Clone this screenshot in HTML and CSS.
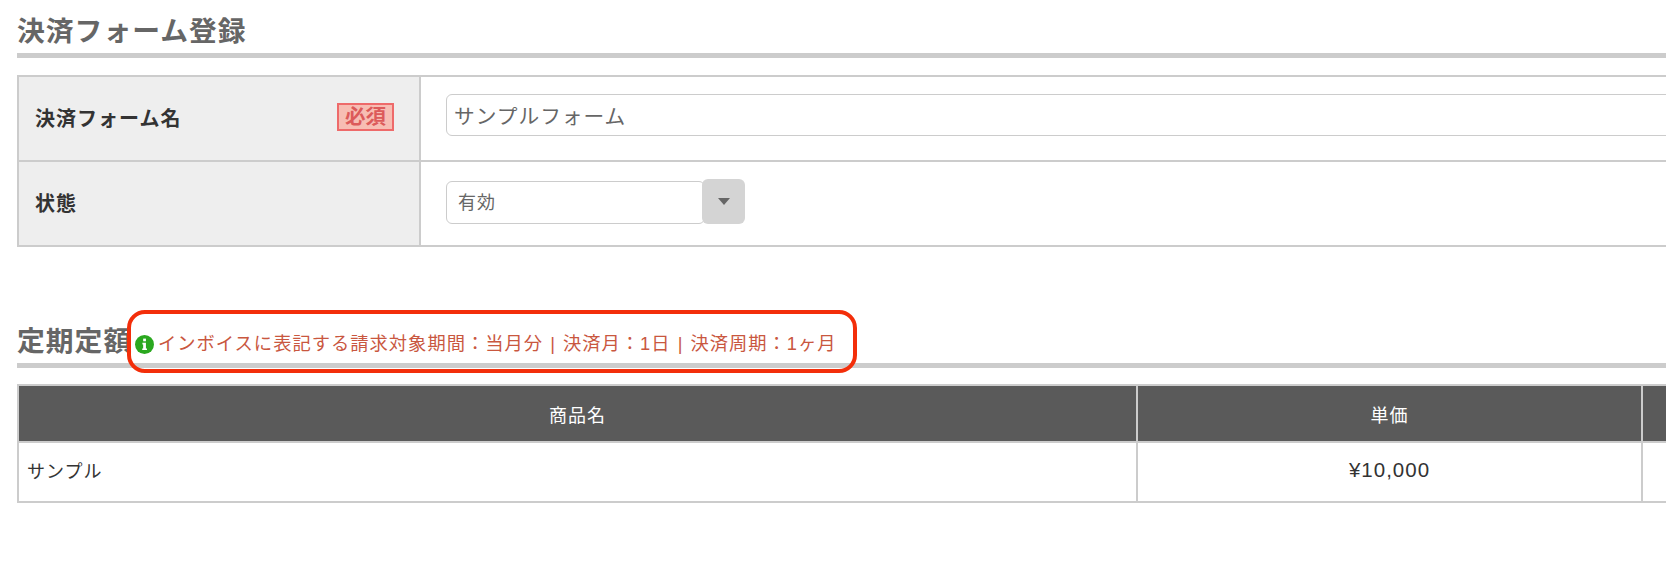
FILE: index.html
```html
<!DOCTYPE html>
<html lang="ja">
<head>
  <meta charset="UTF-8" />
  <title>決済フォーム登録</title>
  <link rel="stylesheet" href="styles.css">
</head>
<body>
  <div class="page">
    <!-- 基本情報 -->
    <section class="section-form">
      <h2 class="section-title"><span>決済フォーム登録</span></h2>
      <table class="form-table">
        <tr>
          <th>
            <div class="form-label">
              決済フォーム名
              <span class="required">必須</span>
            </div>
          </th>
          <td><input class="text-input" type="text" value="サンプルフォーム" /></td>
        </tr>
        <tr>
          <th><div class="form-label">状態</div></th>
          <td>
            <div class="select-wrap">
              <select class="select-box"><option>有効</option></select>
              <span class="select-btn"><span class="select-arrow"></span></span>
            </div>
          </td>
        </tr>
      </table>
    </section>

    <!-- 定期定額 -->
    <section class="section-items">
      <h2 class="section-title">
        <span class="title-short">定期定額</span>
        <span class="invoice-note">
          <svg class="info-icon" viewBox="0 0 20 20">
            <circle cx="10" cy="10" r="10" fill="#2aa81f" />
            <rect x="8.6" y="3.8" width="2.9" height="2.8" fill="#fff" />
            <path d="M7.8 8.2h3.7v6h1.1v1.7H7.6v-1.7h1v-4.3H7.8z" fill="#fff" />
          </svg>
          インボイスに表記する請求対象期間：当月分 | 決済月：1日 | 決済周期：1ヶ月
        </span>
      </h2>
      <div class="note-ring"></div>
      <table class="item-table">
        <tr>
          <th class="col-name">商品名</th>
          <th class="col-price">単価</th>
          <th></th>
        </tr>
        <tr>
          <td>サンプル</td>
          <td class="price">¥10,000</td>
          <td></td>
        </tr>
      </table>
    </section>
  </div>
</body>
</html>
```

FILE: styles.css
```css
html, body {
  margin: 0;
  overflow: hidden;
  background: #fff;
}
body {
  font-family: "Liberation Sans", "Noto Sans CJK JP", sans-serif;
  font-size: 18px;
  letter-spacing: 1px;
  color: #333;
}
.page {
  width: 1800px;
  padding-left: 17px;
}

/* 見出し */
.section-title {
  display: flex;
  align-items: flex-end;
  height: 53px;
  margin: 0;
  border-bottom: 5px solid #ccc;
  font-size: 27.8px;
  line-height: 40px;
  letter-spacing: 1px;
  color: #666;
}
.section-title > span:first-child {
  padding-bottom: 1px;
}

/* 基本情報テーブル */
.form-table,
.item-table {
  width: 100%;
  border-collapse: collapse;
  table-layout: fixed;
}
.form-table {
  margin-top: 17px;
}
.form-table th,
.form-table td {
  height: 83px;
  padding: 0;
  border: 2px solid #ccc;
  vertical-align: top;
}
.form-table th {
  width: 400px;
  background: #eee;
  text-align: left;
}
.form-table td {
  padding-left: 25px;
}
.form-label {
  display: flex;
  justify-content: space-between;
  align-items: center;
  height: 80px;
  padding: 0 25px 0 16px;
  font-size: 20px;
  color: #333;
}
.required {
  padding: 0 6px;
  border: 2px solid #ee6a6a;
  background: #f7bdb3;
  font-size: 20.5px;
  line-height: 24px;
  letter-spacing: 0;
  color: #dc5a5a;
}
.text-input {
  display: block;
  box-sizing: border-box;
  width: 100%;
  height: 42px;
  margin-top: 17px;
  padding: 0 7px;
  border: 1.5px solid #ccc;
  border-radius: 6px;
  font-family: inherit;
  font-size: 20.7px;
  letter-spacing: 1px;
  color: #666;
}
.select-wrap {
  display: flex;
  align-items: flex-end;
  margin-top: 17px;
}
.select-box {
  appearance: none;
  width: 259px;
  height: 43px;
  padding: 0 11px;
  border: 1.5px solid #ccc;
  border-radius: 6px;
  background: #fff;
  font-family: inherit;
  font-size: 18px;
  letter-spacing: 1px;
  color: #666;
}
.select-btn {
  display: flex;
  justify-content: center;
  align-items: center;
  width: 43px;
  height: 45px;
  margin-left: -3px;
  border-radius: 6px;
  background: #d4d4d4;
}
.select-arrow {
  border-top: 7px solid #666;
  border-left: 6px solid transparent;
  border-right: 6px solid transparent;
}

/* 定期定額 */
.section-items {
  position: relative;
  margin-top: 63px;
}
.title-short {
  width: 110px;
  white-space: nowrap;
}
.invoice-note {
  display: flex;
  align-items: center;
  height: 38px;
  font-size: 18.3px;
  font-weight: normal;
  word-spacing: 1px;
  color: #c9573f;
  white-space: nowrap;
}
.info-icon {
  width: 19px;
  height: 19px;
  margin: 0 4px 0 8px;
}
.note-ring {
  position: absolute;
  left: 110px;
  top: 0;
  width: 722px;
  height: 55px;
  border: 4px solid #f32e0a;
  border-radius: 18px;
}
.item-table {
  margin-top: 16px;
}
.item-table th,
.item-table td {
  padding: 0;
  border: 2px solid #ccc;
  font-weight: normal;
  text-align: center;
}
.item-table th {
  height: 55px;
  background: #5a5a5a;
  color: #fff;
}
.item-table td {
  height: 54px;
  padding-bottom: 4px;
}
.item-table td:first-child {
  padding-left: 8px;
  text-align: left;
}
.item-table .price {
  font-size: 20.5px;
}
.col-name {
  width: 1117px;
}
.col-price {
  width: 503px;
}
```
